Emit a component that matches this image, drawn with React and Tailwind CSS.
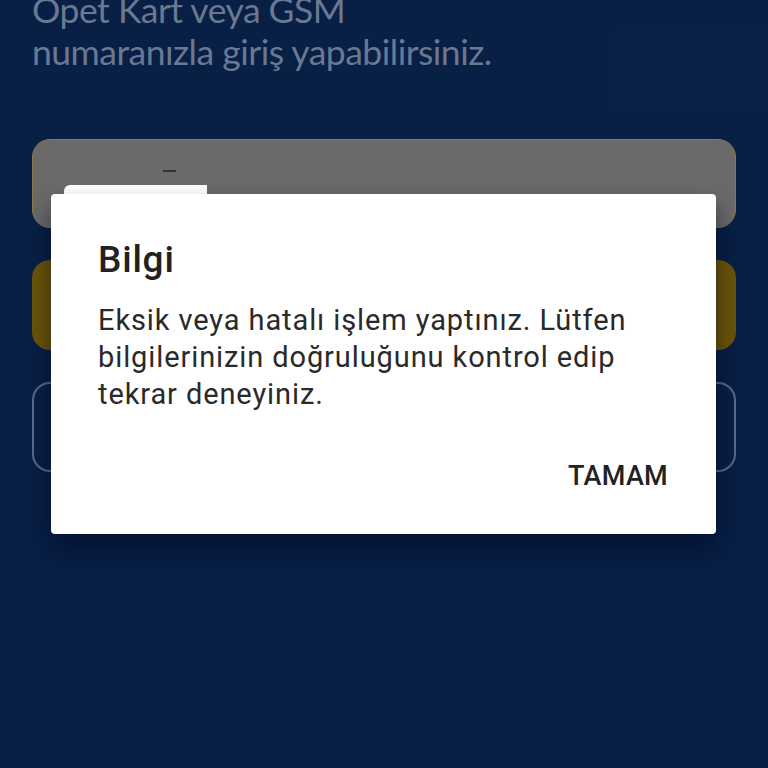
import React from "react";

const LoginBackground = () => (
  <div className="flex flex-col px-8">
    <p
      className="-mt-[11px] text-[35.5px] leading-[42px] text-[#6b7891] tracking-[-0.5px]"
      style={{ fontFamily: "Lato, 'Liberation Sans', sans-serif" }}
    >
      Opet Kart veya GSM
      <br />
      numaranızla giriş yapabilirsiniz.
    </p>

    <div className="mt-[66px] flex flex-col gap-[32px]">
      <div className="h-[89px] rounded-[18px] border border-[#8a7b4c] bg-[#6a6a6a]" />
      <div className="h-[90px] rounded-[18px] bg-[#6b5408]" />
      <div className="h-[90px] rounded-[18px] border-2 border-[#5d6a85]" />
    </div>
  </div>
);

const InfoDialog = () => (
  <div className="absolute left-[51px] top-[194px] w-[665px] h-[340px] rounded-[4px] bg-white shadow-[0_14px_24px_rgba(0,8,30,0.55)]">
    <div
      className="flex flex-col pl-[47px] pt-[42px] pr-[40px]"
      style={{ fontFamily: "Roboto, 'Liberation Sans', sans-serif" }}
    >
      <h2 className="text-[37px] leading-[48px] font-medium text-[#212121] tracking-[0.8px]">
        Bilgi
      </h2>
      <p className="mt-[18px] text-[29px] leading-[37px] text-[#2a2a2a] tracking-[0.9px]">
        Eksik veya hatalı işlem yaptınız. Lütfen
        <br />
        bilgilerinizin doğruluğunu kontrol edip
        <br />
        tekrar deneyiniz.
      </p>
      <div className="mt-[47px] flex justify-end pr-[8px]">
        <button className="text-[27px] leading-[32px] font-medium text-[#222] tracking-[0.3px]">
          TAMAM
        </button>
      </div>
    </div>
  </div>
);

export default function App() {
  return (
    <div className="relative h-[768px] w-[768px] overflow-hidden bg-[#081f46]">
      <div className="pointer-events-none absolute right-0 top-[30px] h-[80px] w-[160px] bg-gradient-to-l from-[#0a2249] to-transparent" />
      <LoginBackground />
      <div className="absolute left-[163px] top-[170px] h-[2px] w-[13px] bg-[#333]" />
      <div className="absolute left-[64px] top-[185px] h-[12px] w-[143px] rounded-tl-[6px] bg-white" />
      <InfoDialog />
    </div>
  );
}
